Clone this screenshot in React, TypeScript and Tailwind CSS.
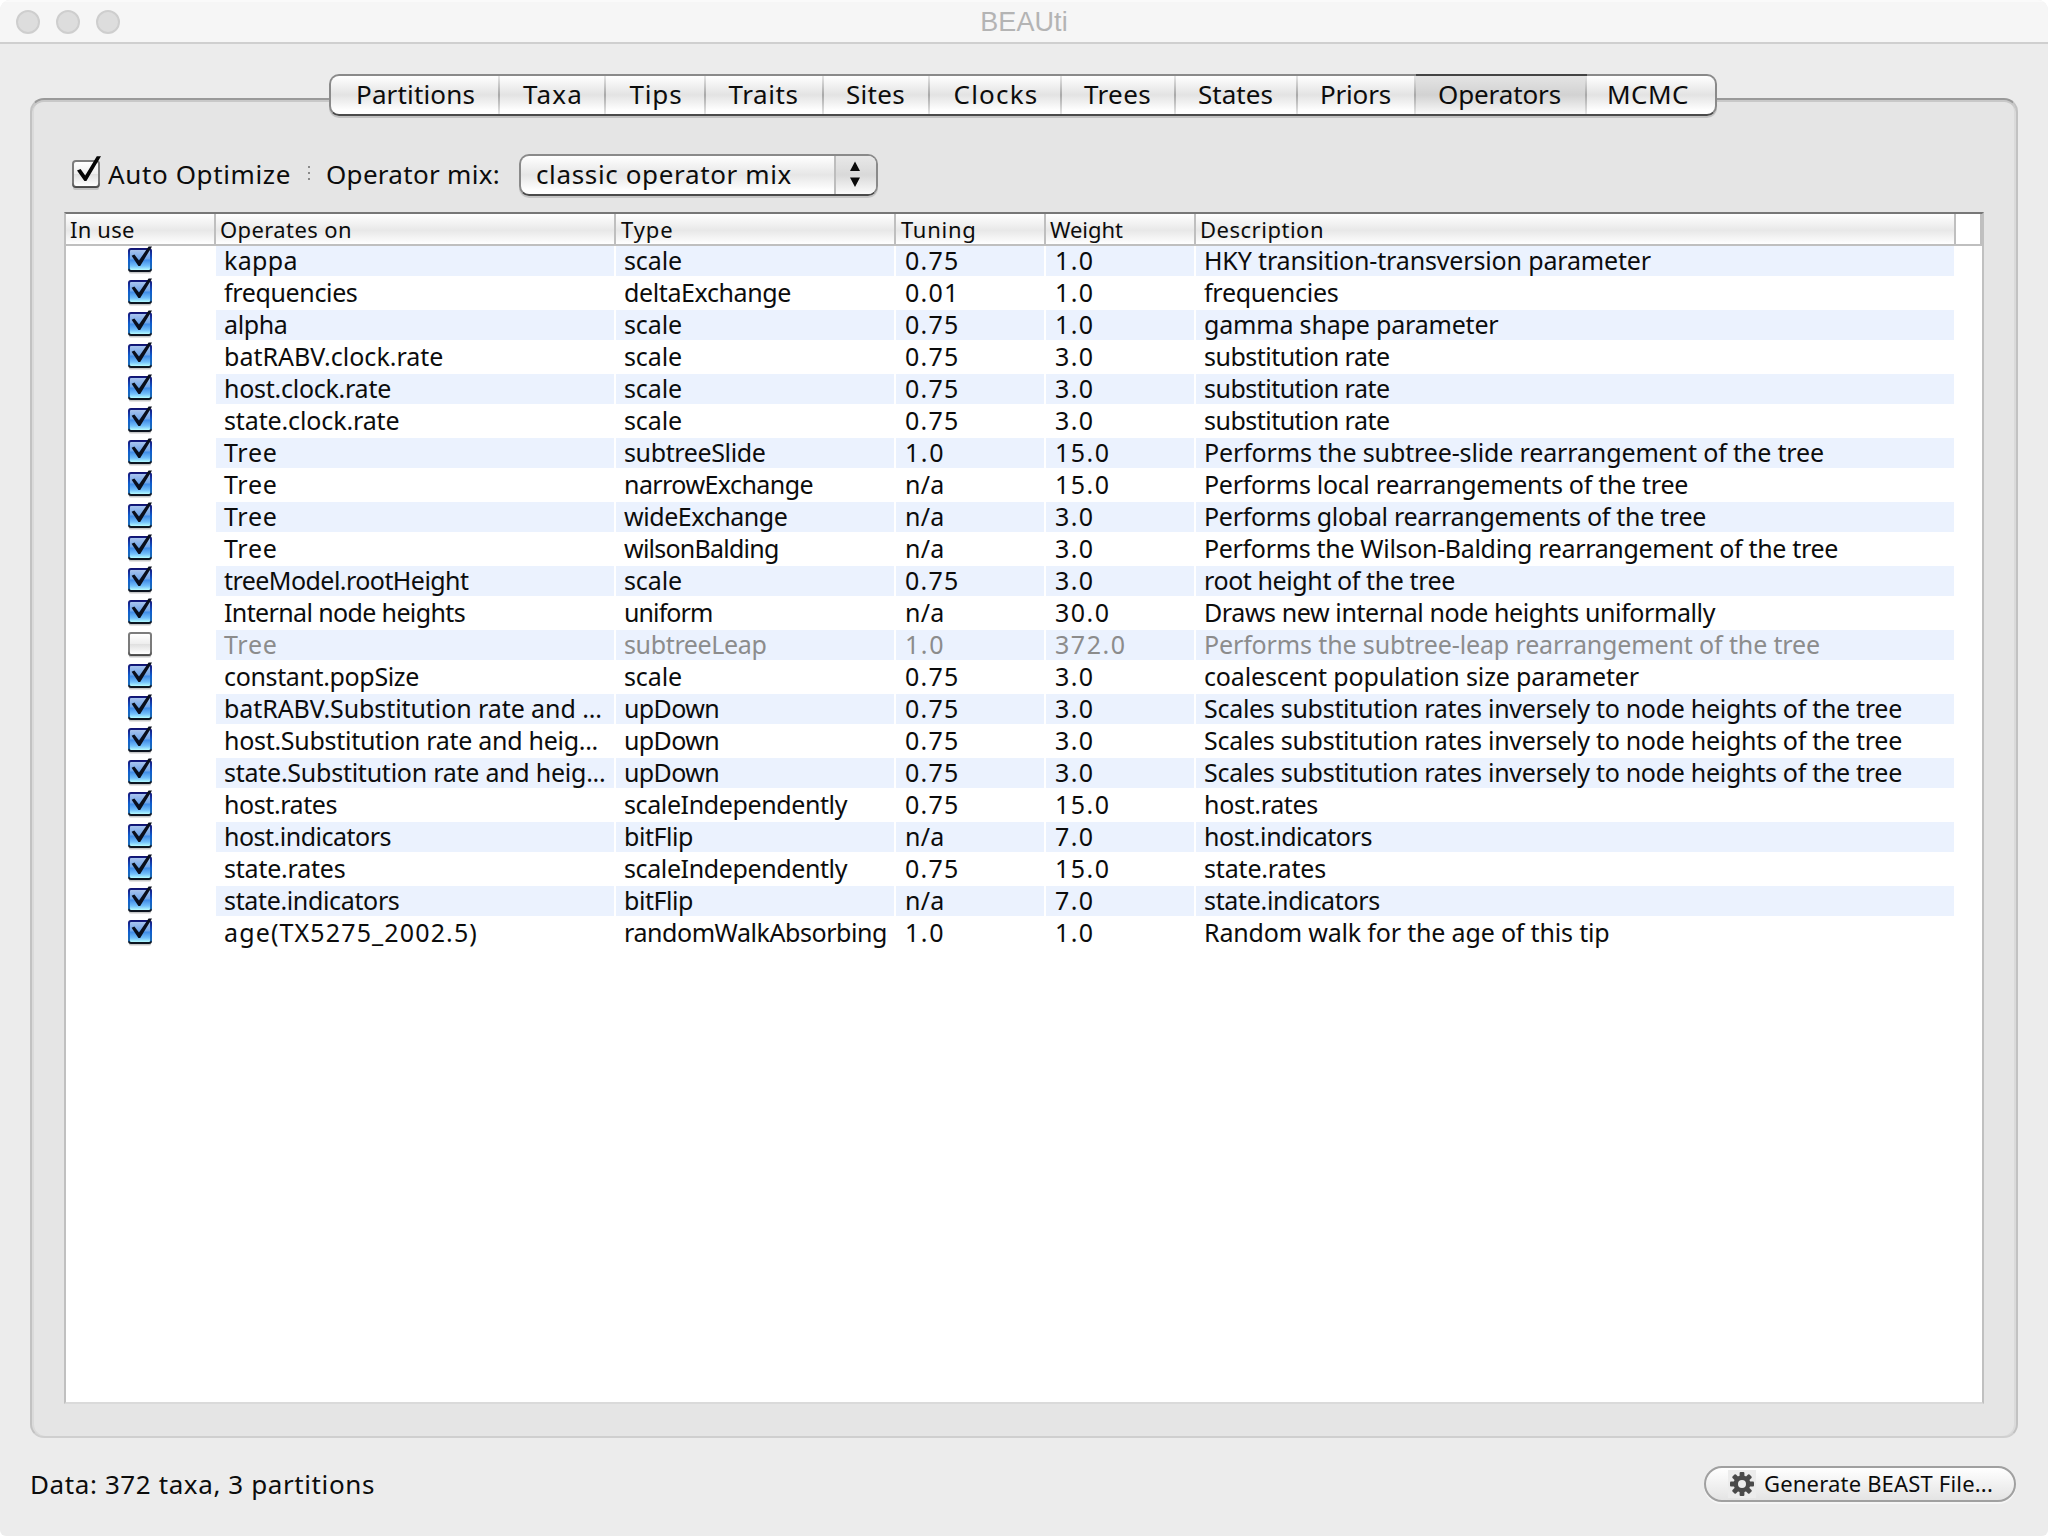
import { useLayoutEffect, useRef, useState } from "react";

/** A line of text whose tracking is adjusted so that it spans `w` pixels. */
function Fit({ text, w }: { text: string; w: number }) {
  const ref = useRef<HTMLSpanElement>(null);
  const [spacing, setSpacing] = useState<number | null>(null);
  useLayoutEffect(() => {
    if (ref.current && spacing === null) {
      setSpacing((w - ref.current.getBoundingClientRect().width) / text.length);
    }
  }, [spacing, text, w]);
  return (
    <span ref={ref} className="inline-block whitespace-pre" style={{ letterSpacing: spacing === null ? undefined : `${spacing}px` }}>
      {text}
    </span>
  );
}

type Cell = [string, number];
type Row = { on: boolean; cells: [Cell, Cell, Cell, Cell, Cell] };

const n = {
  t075: ["0.75", 54.5] as Cell,
  t001: ["0.01", 54.5] as Cell,
  t10: ["1.0", 40] as Cell,
  na: ["n/a", 39.5] as Cell,
  w1: ["1.0", 39.5] as Cell,
  w3: ["3.0", 39.5] as Cell,
  w7: ["7.0", 39.5] as Cell,
  w15: ["15.0", 55.5] as Cell,
  w30: ["30.0", 55.5] as Cell,
  w372: ["372.0", 71.5] as Cell,
};
const scale: Cell = ["scale", 58];
const upDown: Cell = ["upDown", 95];
const tree: Cell = ["Tree", 53.5];
const subRate: Cell = ["substitution rate", 185.5];
const scales: Cell = ["Scales substitution rates inversely to node heights of the tree", 698];

const row = (a: Cell, b: Cell, c: Cell, d: Cell, e: Cell, on = true): Row => ({ on, cells: [a, b, c, d, e] });

const rows: Row[] = [
  row(["kappa", 74], scale, n.t075, n.w1, ["HKY transition-transversion parameter", 447]),
  row(["frequencies", 133.5], ["deltaExchange", 167], n.t001, n.w1, ["frequencies", 134.5]),
  row(["alpha", 63.5], scale, n.t075, n.w1, ["gamma shape parameter", 294.5]),
  row(["batRABV.clock.rate", 219.5], scale, n.t075, n.w3, subRate),
  row(["host.clock.rate", 167], scale, n.t075, n.w3, subRate),
  row(["state.clock.rate", 175.5], scale, n.t075, n.w3, subRate),
  row(tree, ["subtreeSlide", 141.5], n.t10, n.w15, ["Performs the subtree-slide rearrangement of the tree", 620]),
  row(tree, ["narrowExchange", 189], n.na, n.w15, ["Performs local rearrangements of the tree", 484]),
  row(tree, ["wideExchange", 163.5], n.na, n.w3, ["Performs global rearrangements of the tree", 502]),
  row(tree, ["wilsonBalding", 154.5], n.na, n.w3, ["Performs the Wilson-Balding rearrangement of the tree", 634]),
  row(["treeModel.rootHeight", 244.5], scale, n.t075, n.w3, ["root height of the tree", 251]),
  row(["Internal node heights", 241], ["uniform", 88.5], n.na, n.w30, ["Draws new internal node heights uniformally", 511]),
  row(tree, ["subtreeLeap", 142.5], n.t10, n.w372, ["Performs the subtree-leap rearrangement of the tree", 616], false),
  row(["constant.popSize", 195], scale, n.t075, n.w3, ["coalescent population size parameter", 435]),
  row(["batRABV.Substitution rate and ...", 378], upDown, n.t075, n.w3, scales),
  row(["host.Substitution rate and heig...", 374], upDown, n.t075, n.w3, scales),
  row(["state.Substitution rate and heig...", 381.5], upDown, n.t075, n.w3, scales),
  row(["host.rates", 113], ["scaleIndependently", 223], n.t075, n.w15, ["host.rates", 114]),
  row(["host.indicators", 167], ["bitFlip", 69], n.na, n.w7, ["host.indicators", 168]),
  row(["state.rates", 121.5], ["scaleIndependently", 223], n.t075, n.w15, ["state.rates", 122]),
  row(["state.indicators", 175.5], ["bitFlip", 69], n.na, n.w7, ["state.indicators", 176]),
  row(["age(TX5275_2002.5)", 254], ["randomWalkAbsorbing", 263], n.t10, n.w1, ["Random walk for the age of this tip", 405.5]),
];

const tabs: { label: string; w: number; cls: string }[] = [
  { label: "Partitions", w: 119, cls: "w-[169px]" },
  { label: "Taxa", w: 60, cls: "w-[106px]" },
  { label: "Tips", w: 53, cls: "w-[100px]" },
  { label: "Traits", w: 70, cls: "w-[118px] pr-[3px]" },
  { label: "Sites", w: 59, cls: "w-[106px] pr-[3px]" },
  { label: "Clocks", w: 85, cls: "w-[132px]" },
  { label: "Trees", w: 67, cls: "w-[114px] pr-[3px]" },
  { label: "States", w: 75, cls: "w-[122px] pr-[3px]" },
  { label: "Priors", w: 71, cls: "w-[118px] pr-[3px]" },
  { label: "Operators", w: 123, cls: "w-[171px] pr-[4px]" },
  { label: "MCMC", w: 82, cls: "grow pr-[6px]" },
];

const columns: { label: string; w: number; cls: string }[] = [
  { label: "In use", w: 64.5, cls: "w-[150px] pl-1" },
  { label: "Operates on", w: 132, cls: "w-[400px] pl-1" },
  { label: "Type", w: 52.5, cls: "w-[280px] pl-[5px]" },
  { label: "Tuning", w: 75.5, cls: "w-[150px] pl-[5px]" },
  { label: "Weight", w: 73, cls: "w-[150px] pl-1" },
  { label: "Description", w: 124, cls: "w-[760px] pl-1" },
];

const cellWidths = [
  "w-[398px] mr-[2px] pl-2",
  "w-[278px] mr-[2px] pl-2",
  "w-[148px] mr-[2px] pl-[9px]",
  "w-[148px] mr-[2px] pl-[9px]",
  "w-[758px] pl-2",
];

function RowCheck({ on }: { on: boolean }) {
  return (
    <svg width="28" height="30" viewBox="0 0 28 30" className="block">
      <defs>
        <linearGradient id="aqua" x1="0" y1="0" x2="0" y2="1">
          <stop offset="0" stopColor="#a9c4ee" />
          <stop offset="0.45" stopColor="#6fa6ea" />
          <stop offset="0.5" stopColor="#3f8be6" />
          <stop offset="0.8" stopColor="#72c0fb" />
          <stop offset="1" stopColor="#b4fbff" />
        </linearGradient>
        <linearGradient id="aquaEdge" x1="0" y1="0" x2="0" y2="1">
          <stop offset="0" stopColor="#11116e" />
          <stop offset="0.2" stopColor="#16309c" />
          <stop offset="0.5" stopColor="#0f5fd0" />
          <stop offset="0.85" stopColor="#1c6db8" />
          <stop offset="0.92" stopColor="#0c1420" />
          <stop offset="1" stopColor="#0c1420" />
        </linearGradient>
        <linearGradient id="plain" x1="0" y1="0" x2="0" y2="1">
          <stop offset="0" stopColor="#ffffff" />
          <stop offset="0.48" stopColor="#eeeeee" />
          <stop offset="0.52" stopColor="#e0e0e0" />
          <stop offset="1" stopColor="#ffffff" />
        </linearGradient>
        <linearGradient id="plainEdge" x1="0" y1="0" x2="0" y2="1">
          <stop offset="0" stopColor="#7c7c7c" />
          <stop offset="0.8" stopColor="#7a7a7a" />
          <stop offset="1" stopColor="#444444" />
        </linearGradient>
      </defs>
      <rect x="3" y="24" width="22" height="3.4" rx="1.5" fill="#000" opacity="0.22" />
      <rect x="2" y="2" width="24" height="24" rx="3" fill={on ? "url(#aquaEdge)" : "url(#plainEdge)"} />
      <rect x="4" y="4" width="20" height="20" rx="1" fill={on ? "url(#aqua)" : "url(#plain)"} />
      {on && <path d="M5.6 9.8 L8.4 8.6 L13 14.6 L22.6 0.4 L26 0.4 L14.2 20 L12.4 20 Z" fill="#0a0f1c" />}
    </svg>
  );
}

function OptimizeCheck() {
  return (
    <svg width="34" height="36" viewBox="0 0 34 36" className="block">
      <rect x="3" y="31" width="26" height="4" rx="2" fill="#000" opacity="0.15" />
      <rect x="2" y="5" width="28" height="28" rx="4" fill="url(#plainEdge)" />
      <rect x="4" y="7" width="24" height="24" rx="2" fill="url(#plain)" />
      <path d="M7 15.4 L10.6 14 L15.2 20.6 L26.8 1.2 L31 1.2 L16.4 26 L14.4 26 Z" fill="#050505" />
    </svg>
  );
}

function Gear() {
  return (
    <svg width="28" height="28" viewBox="-14 -14 28 28" className="block bg-[#ececec]">
      <g fill="#4a4a4a">
        {[0, 45, 90, 135].map((a) => (
          <rect key={a} x="-2.4" y="-12" width="4.8" height="24" rx="1" transform={`rotate(${a})`} />
        ))}
        <circle r="8.4" />
      </g>
      <circle r="4" fill="#ececec" />
    </svg>
  );
}

export default function App() {
  return (
    <div className="h-[1536px] w-[2048px] overflow-hidden bg-white font-['Noto_Sans','Open_Sans',sans-serif] text-[26px] text-[#0c0c0c]">
      <div className="flex h-full flex-col overflow-hidden rounded-t-[10px] rounded-b-[6px] bg-[#ececec]">
        <header className="relative flex h-11 shrink-0 items-start justify-center border-b-2 border-[#cfcfcf] bg-[#f6f6f6] shadow-[inset_0_2px_0_#fafafa]">
          <div className="absolute top-[10px] left-4 flex gap-4">
            <i className="size-6 rounded-full border-2 border-[#cecece] bg-[#dddddd]" />
            <i className="size-6 rounded-full border-2 border-[#cecece] bg-[#dddddd]" />
            <i className="size-6 rounded-full border-2 border-[#cecece] bg-[#dddddd]" />
          </div>
          <h1 className="font-['Liberation_Sans',sans-serif] text-[27px] leading-[45px] text-[#b4b4b4]">
            <Fit text="BEAUti" w={87.5} />
          </h1>
        </header>

        <nav className="relative z-10 mt-[30px] -mb-[18px] ml-[329px] flex h-[42px] w-[1388px] shrink-0 rounded-[10px] border-2 border-x-[#8a8a8a] border-t-[#8a8a8a] border-b-[#4b4b4b] bg-linear-to-b from-white from-0% via-[#e3e3e3] via-50% to-white to-90% leading-[36px] shadow-[0_2px_0_#c2c2c2]">
          {tabs.map((t, i) => (
            <div
              key={t.label}
              className={`relative flex justify-center ${t.cls} ${
                t.label === "Operators"
                  ? "-mt-[2px] border-t-2 border-[#444444] bg-linear-to-b from-[#e4e4e4] via-[#d2d2d2] via-50% to-[#fafafa]"
                  : ""
              }`}
            >
              <Fit text={t.label} w={t.w} />
              {i < tabs.length - 1 && (
                <i className="absolute top-0 right-0 h-full w-[2px] bg-linear-to-b from-[#e6e6e6] via-[#a8a8a8] to-[#e6e6e6]" />
              )}
            </div>
          ))}
        </nav>

        <main className="mx-[30px] flex h-[1340px] shrink-0 flex-col rounded-[14px] border-2 border-x-[#c2c2c2] border-t-[#999999] border-b-[#cfcfcf] bg-[#e5e5e5] px-8 pt-[54px] shadow-[inset_0_2px_0_#c8c8c8,inset_2px_0_0_#dadada,inset_-2px_0_0_#dadada]">
          <div className="flex h-[42px] shrink-0 items-start leading-[41px]">
            <div className="ml-[6px] pt-[1px]">
              <OptimizeCheck />
            </div>
            <div className="ml-1 w-[200px]">
              <Fit text="Auto Optimize" w={183} />
            </div>
            <div className="mt-3 flex w-[18px] flex-col gap-1">
              <i className="size-[2px] bg-[#8a8a8a]" />
              <i className="size-[2px] bg-[#8a8a8a]" />
              <i className="size-[2px] bg-[#8a8a8a]" />
            </div>
            <div className="w-[193px]">
              <Fit text="Operator mix:" w={174} />
            </div>
            <div className="flex h-[42px] w-[359px] overflow-hidden rounded-[10px] border-2 border-x-[#8a8a8a] border-t-[#8a8a8a] border-b-[#4b4b4b] bg-linear-to-b from-white from-0% via-[#e6e6e6] via-50% to-white to-90% leading-[37px] shadow-[0_2px_0_#c6c6c6]">
              <div className="w-[313px] pl-[15px]">
                <Fit text="classic operator mix" w={256} />
              </div>
              <div className="flex grow items-center justify-center border-l-2 border-[#bdbdbd] bg-linear-to-b from-[#e8e8e8] via-[#d9d9d9] to-[#fbfbfb] pr-[3px]">
                <svg width="12" height="28" viewBox="0 0 12 28" className="-mt-[2px] block">
                  <path d="M6 1.5 L11 11 H1 Z M6 27 L11 17.5 H1 Z" fill="#0a0a0a" />
                </svg>
              </div>
            </div>
          </div>

          <section className="mt-4 flex h-[1192px] w-[1920px] flex-col border-2 border-x-[#c0c0c0] border-t-[#777777] border-b-[#dadada] bg-white">
            <div className="flex h-8 shrink-0 border-r-2 border-b-2 border-[#bfbfbf] bg-linear-to-b from-white via-[#e8e8e8] via-55% to-white text-[22px] leading-[30px]">
              {columns.map((c) => (
                <div key={c.label} className={`shrink-0 border-r-2 border-[#bfbfbf] ${c.cls}`}>
                  <Fit text={c.label} w={c.w} />
                </div>
              ))}
              <div className="grow bg-white" />
            </div>
            <div className="flex flex-col gap-[2px] text-[25px] leading-[28px]">
              {rows.map((r, i) => (
                <div key={i} className={`flex h-[30px] ${r.on ? "" : "text-[#8c8c8c]"}`}>
                  <div className="w-[150px] shrink-0 pl-[60px]">
                    <RowCheck on={r.on} />
                  </div>
                  {r.cells.map(([text, w], j) => (
                    <div key={j} className={`shrink-0 ${cellWidths[j]} ${i % 2 === 0 ? "bg-[#ebf2fe]" : ""}`}>
                      <Fit text={text} w={w} />
                    </div>
                  ))}
                </div>
              ))}
            </div>
          </section>
        </main>

        <footer className="mt-7 flex items-start justify-between pr-8 pl-[30px] leading-[36px]">
          <Fit text="Data: 372 taxa, 3 partitions" w={345} />
          <button className="flex h-9 w-[312px] items-start rounded-full border-2 border-[#a0a0a0] bg-linear-to-b from-white to-[#e4e4e4] pl-[22px] text-[22px] leading-[31px] shadow-[0_2px_0_#f5f5f5]">
            <span className="mt-[2px]">
              <Gear />
            </span>
            <span className="ml-2">
              <Fit text="Generate BEAST File..." w={229} />
            </span>
          </button>
        </footer>
      </div>
    </div>
  );
}
